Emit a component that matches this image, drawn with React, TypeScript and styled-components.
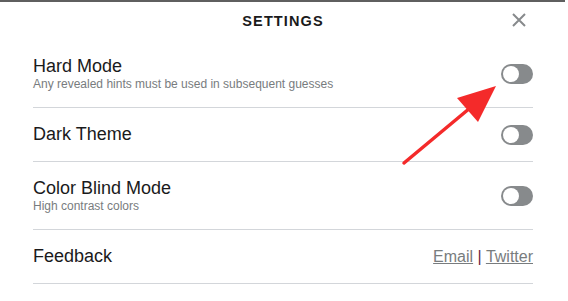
import React from "react";
import styled, { createGlobalStyle } from "styled-components";

const Global = createGlobalStyle`
  html, body { margin: 0; padding: 0; background: #fff; }
  body { width: 568px; height: 301px; overflow: hidden; font-family: "Liberation Sans", Arial, sans-serif; }
`;

const Page = styled.div`
  position: relative;
  width: 568px;
  height: 301px;
  background: #fff;
`;

const Panel = styled.div`
  width: 565px;
  border-top: 2px solid #5f5f5f;
  box-sizing: border-box;
`;

const Header = styled.header`
  height: 38px;
  display: flex;
  align-items: center;
  justify-content: center;
  position: relative;
`;

const Title = styled.h1`
  margin: 0;
  font-size: 14.5px;
  font-weight: 700;
  letter-spacing: 1.1px;
  color: #1a1a1b;
  text-transform: uppercase;
  padding-left: 1px;
`;

const Close = styled.button`
  position: absolute;
  right: 37px;
  top: 9px;
  width: 18px;
  height: 18px;
  padding: 0;
  border: 0;
  background: none;
  display: flex;
  align-items: center;
  justify-content: center;
`;

const List = styled.div`
  padding: 0 32px 0 33px;
`;

const Row = styled.div`
  display: flex;
  justify-content: space-between;
  align-items: center;
  padding: 16px 0;
  border-bottom: 1px solid #d3d6da;
`;

const Text = styled.div`
  display: flex;
  flex-direction: column;
`;

const Label = styled.div`
  font-size: 18px;
  color: #1a1a1b;
`;

const Desc = styled.div`
  font-size: 12px;
  color: #787c7e;
`;

const Switch = styled.div`
  width: 32px;
  height: 20px;
  border-radius: 999px;
  background: #878a8c;
  display: flex;
  align-items: center;
  padding: 0 2px;
  box-sizing: border-box;
`;

const Knob = styled.div`
  width: 16px;
  height: 16px;
  border-radius: 50%;
  background: #fff;
`;

const Links = styled.div`
  font-size: 16px;
  color: #787c7e;
  white-space: pre;
`;

const Link = styled.a`
  color: #787c7e;
  text-decoration: underline;
`;

const Pipe = styled.span`
  color: #6b1e3e;
`;

const Arrow = styled.svg`
  position: absolute;
  left: 0;
  top: 0;
  pointer-events: none;
`;

function Setting({ title, desc }: { title: string; desc?: string }) {
  return (
    <Row>
      <Text>
        <Label>{title}</Label>
        {desc && <Desc>{desc}</Desc>}
      </Text>
      <Switch>
        <Knob />
      </Switch>
    </Row>
  );
}

export default function App() {
  return (
    <Page>
      <Global />
      <Panel>
        <Header>
          <Title>Settings</Title>
          <Close aria-label="close">
            <svg width="14" height="14" viewBox="0 0 14 14">
              <path d="M1 1L13 13M13 1L1 13" stroke="#878a8c" strokeWidth="2" />
            </svg>
          </Close>
        </Header>
        <List>
          <Setting title="Hard Mode" desc="Any revealed hints must be used in subsequent guesses" />
          <Setting title="Dark Theme" />
          <Setting title="Color Blind Mode" desc="High contrast colors" />
          <Row>
            <Label>Feedback</Label>
            <Links>
              <Link href="#">Email</Link>
              {" "}
              <Pipe>|</Pipe>
              {" "}
              <Link href="#">Twitter</Link>
            </Links>
          </Row>
        </List>
      </Panel>
      <Arrow width="568" height="301" viewBox="0 0 568 301">
        <line x1="404" y1="163" x2="470" y2="108" stroke="#f42a2a" strokeWidth="3.5" strokeLinecap="round" />
        <polygon points="496,86 457,98 478,122" fill="#f42a2a" />
      </Arrow>
    </Page>
  );
}
